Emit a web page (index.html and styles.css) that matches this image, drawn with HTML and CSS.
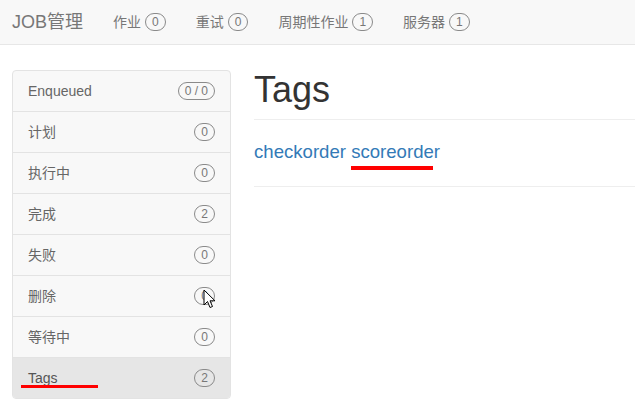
FILE: index.html
```html
<!DOCTYPE html>
<html lang="zh-CN">
<head>
  <meta charset="UTF-8">
  <title>Tags - JOB管理</title>
  <link rel="stylesheet" href="styles.css">
</head>
<body>
  <div class="navbar">
    <a href="#" class="brand">JOB管理</a>
    <a href="#" class="nav-item">作业 <span class="badge">0</span></a>
    <a href="#" class="nav-item">重试 <span class="badge">0</span></a>
    <a href="#" class="nav-item">周期性作业 <span class="badge">1</span></a>
    <a href="#" class="nav-item">服务器 <span class="badge">1</span></a>
  </div>

  <div class="layout">
    <div class="sidebar">
      <a href="#" class="list-item">Enqueued <span class="badge">0 / 0</span></a>
      <a href="#" class="list-item">计划 <span class="badge">0</span></a>
      <a href="#" class="list-item">执行中 <span class="badge">0</span></a>
      <a href="#" class="list-item">完成 <span class="badge">2</span></a>
      <a href="#" class="list-item">失败 <span class="badge">0</span></a>
      <a href="#" class="list-item">删除 <span class="badge">0</span></a>
      <a href="#" class="list-item">等待中 <span class="badge">0</span></a>
      <a href="#" class="list-item active">Tags <span class="badge">2</span></a>
    </div>

    <div class="main">
      <h1 class="page-header">Tags</h1>
      <div class="tags">
        <a href="#">checkorder</a> <a href="#">scoreorder</a>
      </div>
    </div>
  </div>

  <!-- hand-drawn annotations on top of the screenshot -->
  <div class="mark mark-tags"></div>
  <div class="mark mark-score"></div>
  <svg class="cursor" width="14" height="21" viewBox="0 0 14 21">
    <path d="M1 1 L1 16 L4.5 12.5 L7 18.5 L9.5 17.5 L7 11.8 L12 11.8 Z" fill="#fff" stroke="#000" stroke-width="1" stroke-linejoin="round"/>
  </svg>
</body>
</html>
```

FILE: styles.css
```css
body {
  margin: 0;
  position: relative;
  overflow: hidden;
  background: #fff;
  font-family: "Liberation Sans", Arial, "Noto Sans CJK SC", sans-serif;
  font-size: 14px;
  line-height: 20px;
  color: #333;
}

a {
  text-decoration: none;
}

/* top bar */
.navbar {
  display: flex;
  align-items: center;
  height: 44px;
  padding-left: 12px;
  background: #f8f8f8;
  border-bottom: 1px solid #e7e7e7;
}

.brand {
  font-size: 18px;
  color: #777;
  padding-right: 15px;
}

.nav-item {
  color: #777;
  padding: 0 15px;
  display: flex;
  align-items: center;
  gap: 4px;
}

.badge {
  display: inline-block;
  font-size: 12px;
  line-height: 16px;
  padding: 0 6px;
  border: 1px solid #8a8a8a;
  border-radius: 10px;
  color: #777;
}

/* page body */
.layout {
  display: flex;
  padding: 25px 0 0 12px;
}

.sidebar {
  flex: none;
  width: 217px;
  border: 1px solid #e3e3e3;
  border-radius: 4px;
  background: #f8f8f8;
  overflow: hidden;
}

.list-item {
  display: flex;
  justify-content: space-between;
  align-items: center;
  padding: 10px 15px;
  color: #666;
  border-top: 1px solid #e3e3e3;
}

.list-item:first-child {
  border-top: none;
}

.list-item.active {
  background: #e6e6e6;
  color: #555;
}

.main {
  flex: 1;
  margin-left: 23px;
}

.page-header {
  margin: 0 0 19px;
  padding-bottom: 9px;
  border-bottom: 1px solid #eee;
  font-size: 36px;
  font-weight: normal;
  line-height: 1.1;
  color: #333;
}

.tags {
  font-size: 18.6px;
  line-height: 26px;
  padding-bottom: 21px;
  border-bottom: 1px solid #eee;
}

.tags a {
  color: #337ab7;
}

/* red pen marks */
.mark {
  position: absolute;
  height: 3px;
  background: #f00;
}

.mark-tags {
  left: 21px;
  top: 385px;
  width: 77px;
}

.mark-score {
  left: 351px;
  top: 166px;
  width: 82px;
  height: 4px;
}

.cursor {
  position: absolute;
  left: 203px;
  top: 289px;
}
```
